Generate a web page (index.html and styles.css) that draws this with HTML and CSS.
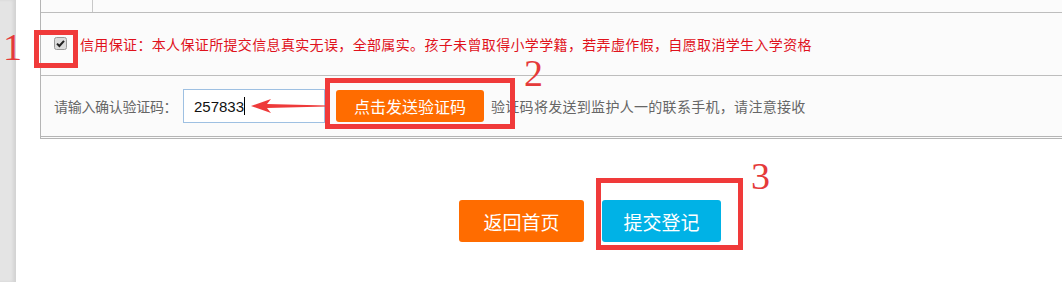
FILE: index.html
```html
<!DOCTYPE html>
<html lang="zh-CN">
<head>
<meta charset="utf-8">
<link rel="stylesheet" href="styles.css">
</head>
<body>
<div class="page">
  <div class="sidebar"></div>
  <div class="main">
    <div class="table">
      <div class="row row-top">
        <div class="cell-a"></div>
        <div class="cell-b"></div>
      </div>
      <div class="row row-pledge">
        <span class="check">
          <svg width="13" height="13" viewBox="0 0 13 13"><rect x="0.5" y="0.5" width="12" height="12" rx="2" fill="#dcdcdc" stroke="#9a9a9a"/><path d="M3 6.6 L5.4 9 L10 3.8" fill="none" stroke="#222" stroke-width="2"/></svg>
        </span>
        <span class="pledge">信用保证：本人保证所提交信息真实无误，全部属实。孩子未曾取得小学学籍，若弄虚作假，自愿取消学生入学资格</span>
      </div>
      <div class="row row-code">
        <span class="label">请输入确认验证码：</span>
        <div class="input"><span class="val">257833</span><span class="caret"></span></div>
        <button class="btn btn-send">点击发送验证码</button>
        <span class="hint">验证码将发送到监护人一的联系手机，请注意接收</span>
      </div>
    </div>
    <div class="actions">
      <button class="btn btn-back">返回首页</button>
      <button class="btn btn-submit">提交登记</button>
    </div>
  </div>
</div>

<div class="mark mark-box box1"></div>
<div class="mark mark-box box2"></div>
<div class="mark mark-box box3"></div>
<div class="mark num num1">1</div>
<div class="mark num num2">2</div>
<div class="mark num num3">3</div>
<svg class="mark arrow" width="76" height="14" viewBox="0 0 76 14"><polygon points="0,7 20,0 16,5 76,6.4 76,7.6 16,9 20,14" fill="#ee3a3a"/></svg>
</body>
</html>
```

FILE: styles.css
```css
* { box-sizing: border-box; }
html, body { margin: 0; padding: 0; background: #fff; overflow: hidden; }
body { width: 1062px; height: 282px; position: relative; font-family: "Microsoft YaHei", "Noto Sans CJK SC", sans-serif; }

.page { display: flex; height: 282px; }
.sidebar { width: 16px; flex: none; background: #e4e4e4; box-shadow: inset -3px 0 3px rgba(0,0,0,0.07); }
.main { flex: 1; padding-left: 24px; min-width: 0; }

.table { border-left: 1px solid #b5b5b5; background: #fbfbfb; border-bottom: 3px double #b5b5b5; }
.row { display: flex; align-items: center; border-bottom: 1px solid #bdbdbd; }
.row:last-child { border-bottom: none; }
.row-top { height: 13px; align-items: stretch; }
.cell-a { width: 52px; border-right: 1px solid #c8c8c8; }
.row-pledge { height: 63px; padding-left: 13px; }
.check { display: flex; width: 13px; height: 13px; margin-right: 13px; margin-top: -1px; }
.pledge { color: #e0121c; font-size: 14px; letter-spacing: 0.35px; white-space: nowrap; }

.row-code { height: 60px; padding-left: 13px; }
.label { color: #666; font-size: 14px; letter-spacing: -0.3px; width: 129px; white-space: nowrap; }
.input { width: 142px; height: 34px; border: 1px solid #9ec0e2; background: #fff; display: flex; align-items: center; padding-left: 10px; font-family: "Liberation Sans", Arial, sans-serif; font-size: 15px; color: #111; }
.caret { width: 1px; height: 18px; background: #000; }
.btn { border: none; color: #fff; font-family: "Microsoft YaHei", "Noto Sans CJK SC", sans-serif; border-radius: 3px; padding: 0; }
.btn-send { width: 148px; height: 32px; background: #ff6c00; font-size: 16px; margin-left: 11px; }
.hint { color: #666; font-size: 14px; letter-spacing: 0.3px; margin-left: 7px; white-space: nowrap; }

.actions { display: flex; gap: 18px; padding-left: 419px; margin-top: 61px; }
.btn-back, .btn-submit { height: 42px; font-size: 19px; }
.btn-back { width: 125px; background: #ff6c00; }
.btn-submit { width: 119px; background: #00b2e6; }

.mark { position: absolute; }
.mark-box { border: 5px solid #f03a3a; }
.box1 { left: 34px; top: 30px; width: 44px; height: 38px; }
.box2 { left: 325px; top: 78px; width: 190px; height: 51px; }
.box3 { left: 596px; top: 178px; width: 147px; height: 72px; }
.num { color: #e53a3a; font-family: "Liberation Serif", serif; font-size: 38px; line-height: 1; }
.num1 { left: 3px; top: 28px; }
.num2 { left: 524px; top: 54px; }
.num3 { left: 751px; top: 157px; }
.arrow { left: 251px; top: 99px; }
```
